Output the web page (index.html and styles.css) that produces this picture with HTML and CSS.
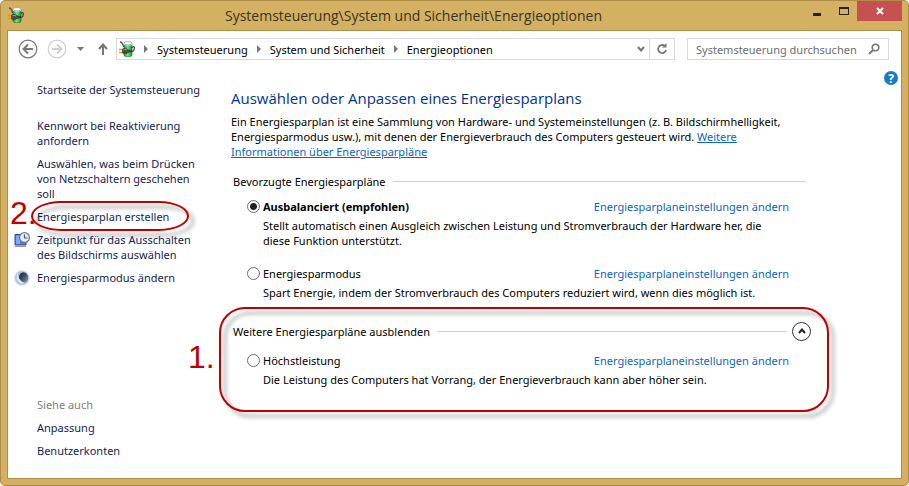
FILE: index.html
```html
<!DOCTYPE html>
<html lang="de">
<head>
    <meta charset="UTF-8">
    <meta name="viewport" content="width=device-width, initial-scale=1.0">
    <title>Energieoptionen</title>
    <link rel="stylesheet" href="styles.css">
</head>
<body>
    <!-- Akku-Symbol, wird in Titelleiste und Adressleiste verwendet -->
    <svg class="defs" width="0" height="0" aria-hidden="true">
        <defs>
            <linearGradient id="akku" x1="0" x2="1">
                <stop offset="0" stop-color="#1c9a2c"/>
                <stop offset="0.45" stop-color="#6bea7a"/>
                <stop offset="1" stop-color="#179a28"/>
            </linearGradient>
        </defs>
        <symbol id="power" viewBox="0 0 16 16">
            <path d="M5 3v11c0 2.500 8 2.500 8 0V3z" fill="url(#akku)" stroke="#1c5b27" stroke-width=".6"/>
            <path d="M5 2.500v1.500c2 1 6 1 8 0v-1.500z" fill="#cfd8e6"/>
            <ellipse cx="9" cy="2.200" rx="4" ry="1.700" fill="#fbfbfd" stroke="#8d93a3" stroke-width=".6"/>
            <path d="M1 1c2 0 3 2 3.500 5" fill="none" stroke="#555" stroke-width="1.300"/>
            <path d="M12 10c2.500 1 3.300-1 3.300-3s-1.500-1.800-2.300 0" fill="none" stroke="#444" stroke-width="1.200"/>
            <path d="M0 8.500h4M0 11.500h4" stroke="#d6a010" stroke-width="1.500"/>
            <path d="M3.500 8c2-1 4-.8 5.500.8l3.500.7v1.200L9 11.500c-1.500 1.500-4 1.500-5.500.5z" fill="#4a4a4a" stroke="#222" stroke-width=".5"/>
            <path d="M4.500 8.800c1.200-.6 2.700-.5 3.500.4" fill="none" stroke="#b5b5b5" stroke-width=".9"/>
        </symbol>
    </svg>

    <div class="window">
        <header class="titlebar">
            <svg class="app-icon" width="16" height="16"><use href="#power"/></svg>
            <h1 class="title">Systemsteuerung\System und Sicherheit\Energieoptionen</h1>
            <div class="window-buttons">
                <button class="win-btn" aria-label="Minimieren">
                    <svg width="10" height="10"><path d="M1 7h8v3H1z" fill="#222"/></svg>
                </button>
                <button class="win-btn" aria-label="Maximieren">
                    <svg width="10" height="8"><path d="M0 0h10v8H0zM1 2v5h8V2z" fill="#222" fill-rule="evenodd"/></svg>
                </button>
                <button class="win-btn close" aria-label="Schließen">
                    <svg width="8" height="8" viewBox="0 0 8 8"><path d="M1 1l6 6M7 1L1 7" stroke="#fff" stroke-width="2"/></svg>
                </button>
            </div>
        </header>

        <div class="client">
            <nav class="navbar">
                <div class="history">
                    <button class="icon-btn" aria-label="Zurück">
                        <svg width="20" height="20" fill="none" stroke="#777"><circle cx="10" cy="10" r="8.800" stroke-width="1.200"/><path d="M15 10H6M10 5.500L5.500 10l4.500 4.500" stroke-width="2"/></svg>
                    </button>
                    <button class="icon-btn" aria-label="Vorwärts">
                        <svg width="20" height="20" fill="none" stroke="#cfcfcf"><circle cx="10" cy="10" r="8.800" stroke-width="1.200"/><path d="M5 10h9M10 5.500l4.500 4.500-4.500 4.500" stroke-width="2"/></svg>
                    </button>
                    <button class="icon-btn" aria-label="Zuletzt besucht">
                        <svg width="7" height="4"><path d="M0 0h7L3.500 4z" fill="#777"/></svg>
                    </button>
                    <button class="icon-btn" aria-label="Nach oben">
                        <svg width="10" height="12" fill="none" stroke="#777"><path d="M5 12V2M1 6l4-4.500L9 6" stroke-width="2"/></svg>
                    </button>
                </div>
                <div class="address">
                    <svg width="16" height="16"><use href="#power"/></svg>
                    <svg class="sep" width="4" height="8"><path d="M0 0l4 4-4 4z" fill="#777"/></svg>
                    <a href="#">Systemsteuerung</a>
                    <svg class="sep" width="4" height="8"><path d="M0 0l4 4-4 4z" fill="#777"/></svg>
                    <a href="#">System und Sicherheit</a>
                    <svg class="sep" width="4" height="8"><path d="M0 0l4 4-4 4z" fill="#777"/></svg>
                    <a href="#">Energieoptionen</a>
                    <button class="icon-btn dropdown" aria-label="Verlauf">
                        <svg width="8" height="6" fill="none"><path d="M1 1l3 3.500L7 1" stroke="#777" stroke-width="2"/></svg>
                    </button>
                    <button class="icon-btn refresh" aria-label="Aktualisieren">
                        <svg width="12" height="12" fill="none"><path d="M8.500 2.800A4 4 0 1 0 10 7" stroke="#777" stroke-width="1.800"/><path d="M6 4.500h4.500V0z" fill="#777"/></svg>
                    </button>
                </div>
                <div class="search">
                    <input type="text" placeholder="Systemsteuerung durchsuchen" aria-label="Systemsteuerung durchsuchen">
                    <svg width="12" height="12" fill="none" stroke="#777"><circle cx="7.500" cy="4.500" r="3.300" stroke-width="1.600"/><path d="M5 7L1 11" stroke-width="2"/></svg>
                </div>
            </nav>

            <button class="icon-btn help" aria-label="Hilfe">?</button>

            <div class="content">
                <aside class="sidebar">
                    <a class="home" href="#">Startseite der Systemsteuerung</a>
                    <ul class="tasks">
                        <li><a href="#">Kennwort bei Reaktivierung anfordern</a></li>
                        <li><a href="#">Auswählen, was beim Drücken von Netzschaltern geschehen soll</a></li>
                        <li class="marked"><span class="step">2.</span><a href="#">Energiesparplan erstellen</a></li>
                        <li>
                            <svg class="task-icon" width="16" height="16" viewBox="0 0 16 16">
                                <path d="M1 2.500h11V13H1z" fill="#5479e4" stroke="#2c48b0"/>
                                <path d="M2 3.500h4V12H2z" fill="#87a4f2"/>
                                <path d="M1 13.500h11V15H1z" fill="#9a9a9a"/>
                                <circle cx="10.500" cy="5.500" r="4.900" fill="#e8edf3" stroke="#737b88" stroke-width="1.200"/>
                                <path d="M10.500 2.500v3.500h3" fill="none" stroke="#4c5970" stroke-width="1.200"/>
                            </svg>
                            <a href="#">Zeitpunkt für das Ausschalten des Bildschirms auswählen</a>
                        </li>
                        <li>
                            <svg class="task-icon" width="16" height="16" viewBox="0 0 16 16">
                                <defs>
                                    <linearGradient id="mond" x1="0" x2="1" y1="0" y2="1">
                                        <stop offset="0.300" stop-color="#2a3547"/>
                                        <stop offset="1" stop-color="#7f98bd"/>
                                    </linearGradient>
                                </defs>
                                <circle cx="8" cy="8" r="7.300" fill="#a9bfde" stroke="#d4dce8"/>
                                <ellipse cx="9.500" cy="7.500" rx="4.500" ry="5.300" fill="url(#mond)"/>
                                <path d="M4 2c-1 5 2 9 7 11-6 2-11-3-7-11z" fill="#dbe8f8"/>
                            </svg>
                            <a href="#">Energiesparmodus ändern</a>
                        </li>
                    </ul>
                    <div class="see-also">
                        <span>Siehe auch</span>
                        <a href="#">Anpassung</a>
                        <a href="#">Benutzerkonten</a>
                    </div>
                </aside>

                <main class="main">
                    <h2>Auswählen oder Anpassen eines Energiesparplans</h2>
                    <p class="intro">Ein Energiesparplan ist eine Sammlung von Hardware- und Systemeinstellungen (z. B. Bildschirmhelligkeit, Energiesparmodus usw.), mit denen der Energieverbrauch des Computers gesteuert wird. <a href="#">Weitere Informationen über Energiesparpläne</a></p>

                    <section class="group">
                        <div class="group-title"><h3>Bevorzugte Energiesparpläne</h3></div>
                        <div class="plan">
                            <input type="radio" name="plan" id="balanced" checked>
                            <label for="balanced"><strong>Ausbalanciert (empfohlen)</strong></label>
                            <a href="#">Energiesparplaneinstellungen ändern</a>
                            <p>Stellt automatisch einen Ausgleich zwischen Leistung und Stromverbrauch der Hardware her, die diese Funktion unterstützt.</p>
                        </div>
                        <div class="plan">
                            <input type="radio" name="plan" id="saver">
                            <label for="saver">Energiesparmodus</label>
                            <a href="#">Energiesparplaneinstellungen ändern</a>
                            <p>Spart Energie, indem der Stromverbrauch des Computers reduziert wird, wenn dies möglich ist.</p>
                        </div>
                    </section>

                    <section class="group more">
                        <span class="step">1.</span>
                        <div class="group-title">
                            <h3>Weitere Energiesparpläne ausblenden</h3>
                            <button class="icon-btn collapse" aria-label="Ausblenden">
                                <svg width="8" height="6" fill="none"><path d="M1 5l3-3.500L7 5" stroke="#222" stroke-width="2"/></svg>
                            </button>
                        </div>
                        <div class="plan">
                            <input type="radio" name="plan" id="high">
                            <label for="high">Höchstleistung</label>
                            <a href="#">Energiesparplaneinstellungen ändern</a>
                            <p>Die Leistung des Computers hat Vorrang, der Energieverbrauch kann aber höher sein.</p>
                        </div>
                    </section>
                </main>
            </div>
        </div>
    </div>
</body>
</html>
```

FILE: styles.css
```css
:root {
    --rahmen: #d4b062;
    --rahmen-dunkel: #ae8d48;
    --link: #0b63cd;
    --navy: #151c55;
    --rot: #c00000;
}

* {
    margin: 0;
    padding: 0;
    box-sizing: border-box;
}

body {
    background-color: #fff;
    color: #000;
    font-family: "Noto Sans", "Open Sans", sans-serif;
    font-size: 11px;
    line-height: 15px;
}

a {
    color: inherit;
    text-decoration: none;
}

ul {
    list-style: none;
}

svg {
    display: block;
    flex-shrink: 0;
}

.defs {
    position: absolute;
}

.icon-btn {
    display: flex;
    align-items: center;
    justify-content: center;
    border: none;
    background: none;
    cursor: pointer;
}

/* Fenster */
.window {
    display: flex;
    flex-direction: column;
    min-height: 100vh;
    padding: 0 6px 6px;
    background-color: var(--rahmen);
    border: 1px solid var(--rahmen-dunkel);
    border-radius: 5px;
}

.titlebar {
    display: flex;
    align-items: flex-start;
    height: 29px;
}

.app-icon {
    margin: 6px 0 0 1px;
}

.title {
    flex: 1;
    color: #3b3221;
    font-family: "Open Sans", sans-serif;
    font-size: 14px;
    font-weight: normal;
    line-height: 29px;
    text-align: center;
}

.window-buttons {
    display: flex;
}

.win-btn {
    display: flex;
    align-items: center;
    justify-content: center;
    width: 27px;
    height: 20px;
    border: none;
    background: none;
}

.win-btn.close {
    width: 45px;
    background-color: #c75050;
}

/* Inhalt */
.client {
    position: relative;
    flex: 1;
    display: flex;
    flex-direction: column;
    background-color: #fff;
    border: 1px solid var(--rahmen-dunkel);
}

.navbar {
    display: flex;
    align-items: center;
    padding: 7px 12px 0 10px;
}

.history {
    display: flex;
    align-items: center;
    gap: 9px;
    padding-right: 8px;
}

.history .icon-btn:nth-child(3) {
    padding: 0 5px 0 1px;
}

.address {
    flex: 1;
    display: flex;
    align-items: center;
    height: 22px;
    margin-right: 12px;
    padding-left: 2px;
    border: 1px solid #d9d9d9;
}

.sep {
    margin: 0 9px;
}

.dropdown {
    width: 16px;
    margin-left: auto;
}

.refresh {
    width: 25px;
    height: 20px;
    border-left: 1px solid #d9d9d9;
}

.search {
    display: flex;
    align-items: center;
    width: 202px;
    height: 22px;
    padding: 0 8px;
    border: 1px solid #d9d9d9;
}

.search input {
    flex: 1;
    min-width: 0;
    border: none;
    outline: none;
    font: inherit;
}

.search input::placeholder {
    color: #6d6d6d;
}

.help {
    position: absolute;
    top: 40px;
    right: 3px;
    width: 14px;
    height: 14px;
    border-radius: 50%;
    background-color: #1979ca;
    color: #fff;
    font: bold 12px "Open Sans", sans-serif;
}

.content {
    flex: 1;
    display: flex;
}

.sidebar {
    display: flex;
    flex-direction: column;
    width: 203px;
    padding: 22px 6px 20px 29px;
    color: var(--navy);
}

.tasks {
    display: flex;
    flex-direction: column;
    gap: 8px;
    margin-top: 21px;
}

.tasks li {
    position: relative;
}

.task-icon {
    position: absolute;
    top: 0;
    left: -23px;
}

.see-also {
    display: flex;
    flex-direction: column;
    gap: 8px;
    margin-top: auto;
}

.see-also span {
    color: #808080;
}

.main {
    flex: 1;
    max-width: 595px;
    padding: 28px 0 0 20px;
}

h2 {
    color: #003399;
    font-family: "Open Sans", sans-serif;
    font-size: 15px;
    font-weight: normal;
    line-height: 20px;
}

.intro {
    margin-top: 6px;
}

.intro a {
    color: var(--link);
    text-decoration: underline;
}

.group {
    position: relative;
    margin-top: 14px;
    padding-left: 2px;
}

.group.more {
    margin-top: 23px;
}

.group-title {
    display: flex;
    align-items: center;
    height: 16px;
}

.group-title h3 {
    font-size: 11px;
    font-weight: normal;
}

.group-title::after {
    content: "";
    flex: 1;
    order: 1;
    height: 1px;
    margin-left: 7px;
    background-color: #cfcfcf;
}

.collapse {
    order: 2;
    width: 19px;
    height: 19px;
    margin: 0 -5px 0 5px;
    border: 1px solid #333;
    border-radius: 50%;
}

.plan {
    display: grid;
    grid-template-columns: 13px 1fr auto;
    column-gap: 3px;
    row-gap: 4px;
    align-items: center;
    margin-top: 10px;
    padding: 0 17px 0 14px;
}

.plan + .plan {
    margin-top: 18px;
}

.more .plan {
    margin-top: 14px;
}

.plan input {
    appearance: none;
    width: 13px;
    height: 13px;
    border: 1px solid #707070;
    border-radius: 50%;
    background-color: #fff;
}

.plan input:checked {
    background: radial-gradient(circle, #222 0 3px, #fff 4px);
}

.plan a {
    color: var(--link);
}

.plan p {
    grid-column: 2 / 4;
    padding-right: 8px;
}

/* Rote Markierungen */
.marked::after,
.more::after {
    content: "";
    position: absolute;
    border: 2px solid var(--rot);
    filter: drop-shadow(5px 5px 2px rgba(0, 0, 0, 0.4));
    pointer-events: none;
}

.marked::after {
    inset: -8px 16px -7px -6px;
    border-radius: 30px / 15px;
}

.more::after {
    inset: -16px -23px -25px -12px;
    border-radius: 26px;
}

.step {
    position: absolute;
    color: var(--rot);
    font: 32px/32px "Liberation Sans", Arial, sans-serif;
}

.marked .step {
    top: -12px;
    left: -27px;
}

.more .step {
    top: 18px;
    left: -43px;
}
```
